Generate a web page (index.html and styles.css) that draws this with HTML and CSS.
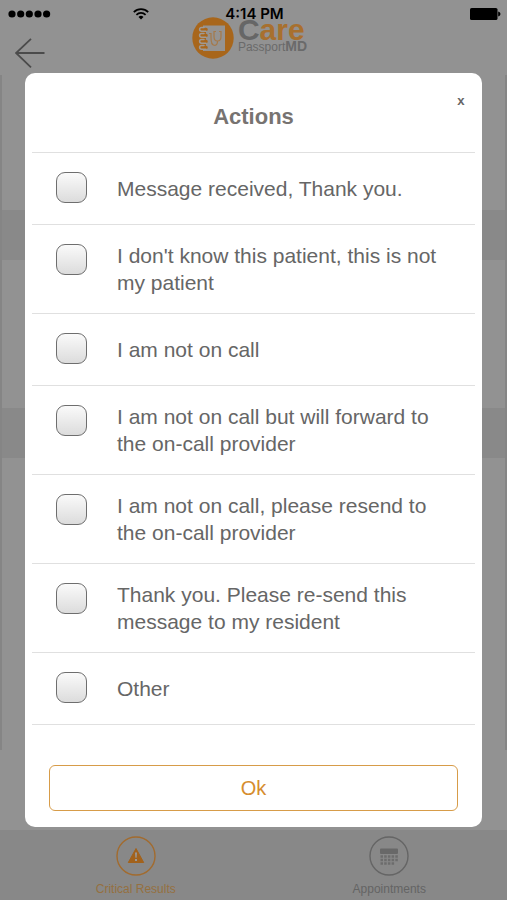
FILE: index.html
```html
<!DOCTYPE html>
<html lang="en">
<head>
<meta charset="utf-8">
<meta name="viewport" content="width=device-width, initial-scale=1">
<title>Care PassportMD</title>
<link rel="stylesheet" href="styles.css">
</head>
<body>
<div class="screen">
  <div class="app">
    <header class="app-header">
      <div class="status-bar">
        <span class="status-left">
          <svg width="44" height="10" viewBox="0 0 44 10"><circle cx="4" cy="5" r="3.6"/><circle cx="12.7" cy="5" r="3.6"/><circle cx="21.3" cy="5" r="3.6"/><circle cx="30" cy="5" r="3.6"/><circle cx="38.6" cy="5" r="3.6"/></svg>
          <svg class="wifi" width="16" height="12" viewBox="0 0 16 12"><g fill="none" stroke="#000" stroke-width="1.7"><path d="M.8 4.1a10.2 10.2 0 0 1 14.4 0"/><path d="M3.4 6.8a6.5 6.5 0 0 1 9.2 0"/></g><path d="M8 11.6 5.5 8.9a3.6 3.6 0 0 1 5 0z"/></svg>
        </span>
        <span class="clock">4:14 PM</span>
        <svg class="battery" width="31" height="12" viewBox="0 0 31 12"><rect width="27.5" height="12" rx="1.6"/><path d="M28.2 3.5c3 .8 3 4.2 0 5z"/></svg>
      </div>
      <div class="title-bar">
        <button class="back" type="button" aria-label="Back">
          <svg width="30" height="30" viewBox="0 0 30 30" fill="none" stroke="#4b4b4b" stroke-width="1.8"><path d="M29.5 15H1M16 .8 1 15l15 14.300"/></svg>
        </button>
        <div class="brand">
          <svg width="42" height="42" viewBox="0 0 42 42">
            <circle cx="21" cy="21" r="20.7" fill="#a8661b"/>
            <path d="M11 8.500h22V34H11z" fill="#959391"/>
            <g fill="none" stroke="#a8661b" stroke-width="2.600"><path d="M10 15.500h4M10 21.500h4M10 27.500h4"/></g>
            <g fill="none" stroke="#a8661b" stroke-width="3.600" stroke-linecap="round"><path d="M14 12.500H9M14 18.500H9M14 24.500H9M14 30.500H9"/></g>
            <g fill="none" stroke="#a09a94" stroke-width="1.500" stroke-linecap="round"><path d="M14 14.200H9.500a1.900 1.900 0 0 1 0-3.800H12M14 20.200H9.500a1.900 1.900 0 0 1 0-3.800H12M14 26.200H9.500a1.900 1.900 0 0 1 0-3.800H12M14 32.200H9.500a1.900 1.900 0 0 1 0-3.800H12"/></g>
            <g fill="none" stroke="#a5794a" stroke-width="1.200"><path d="M17 16.500h2v4M19 20.500c0 5 1 8 4 8M24 14.500h-2v5c0 6 7 6 7 0v-5h-2M25.500 24c0 6-5 5-6 2"/></g>
          </svg>
          <div class="brand-text">
            <div class="brand-care"><span>C</span>are</div>
            <div class="brand-sub">Passport<b>MD</b></div>
          </div>
        </div>
      </div>
    </header>
    <main class="content">
      <div class="pane"></div>
      <div class="band"></div>
      <div class="pane mid"></div>
      <div class="band"></div>
      <div class="pane tall"></div>
    </main>
    <nav class="tabs">
      <a class="tab active" href="#results">
        <svg width="40" height="40" viewBox="0 0 40 40"><circle cx="20" cy="20" r="19" fill="none" stroke="#a26b2e" stroke-width="1.4"/><path d="M20 12.500 27.700 26.500H12.300z" fill="#a2621c" stroke="#a2621c" stroke-linejoin="round"/><path d="M19 16.500h2l-.4 5.200h-1.200zM19 23h2v2h-2z" fill="#999"/></svg>
        <span>Critical Results</span>
      </a>
      <a class="tab" href="#appointments">
        <svg width="40" height="40" viewBox="0 0 40 40"><circle cx="20" cy="20" r="19" fill="none" stroke="#656565" stroke-width="1.4"/><rect x="11" y="12.500" width="18" height="5.500" rx="1" fill="#686868"/><path d="M11.500 20.500h17.500M11.500 24h17.500M11.500 27.500h14" stroke="#6c6c6c" stroke-width="2.400" stroke-dasharray="2.500 1.200"/></svg>
        <span>Appointments</span>
      </a>
    </nav>
  </div>
  <div class="overlay">
    <form class="dialog" role="dialog" aria-labelledby="dialog-title">
      <div class="dialog-head">
        <h1 id="dialog-title">Actions</h1>
        <button class="close" type="button" aria-label="Close">x</button>
      </div>
      <ul class="options">
        <li><label><input type="checkbox"><span>Message received, Thank you.</span></label></li>
        <li><label><input type="checkbox"><span>I don't know this patient, this is not my patient</span></label></li>
        <li><label><input type="checkbox"><span>I am not on call</span></label></li>
        <li><label><input type="checkbox"><span>I am not on call but will forward to the on-call provider</span></label></li>
        <li><label><input type="checkbox"><span>I am not on call, please resend to the on-call provider</span></label></li>
        <li><label><input type="checkbox"><span>Thank you. Please re-send this message to my resident</span></label></li>
        <li><label><input type="checkbox"><span>Other</span></label></li>
      </ul>
      <button class="ok" type="button">Ok</button>
    </form>
  </div>
</div>
</body>
</html>
```
FILE: styles.css
```css
* { box-sizing: border-box; }
body {
  margin: 0;
  background: #929292;
  font-family: "Liberation Sans", Arial, sans-serif;
}
button { font: inherit; padding: 0; border: 0; background: none; }
svg { display: block; flex: none; }

.screen { display: grid; min-height: 100vh; }
.app, .overlay { grid-area: 1 / 1; min-width: 0; }
.app { display: flex; flex-direction: column; }

.app-header { position: relative; height: 75px; }
.status-bar {
  position: absolute;
  inset: 0 0 auto;
  z-index: 1;
  height: 26px;
  padding: 0 6px 0 8px;
  display: grid;
  grid-template-columns: 1fr auto 1fr;
  align-items: center;
}
.status-left { display: flex; align-items: center; justify-content: space-between; padding-right: 76px; }
.clock { font: 600 15px/28px Inter, sans-serif; }
.battery { justify-self: end; }

.title-bar {
  height: 100%;
  display: grid;
  grid-template-columns: 1fr auto 1fr;
  padding: 0 15px;
}
.back { align-self: end; justify-self: start; margin-bottom: 7px; }
.brand { display: flex; gap: 4px; padding-top: 17px; margin-right: 8px; }
.brand-care { color: #a8702e; font: bold 30px/26px "Liberation Sans", Arial, sans-serif; }
.brand-care span { color: #666; }
.brand-sub { color: #6a6a6a; font-size: 12px; line-height: 6px; }
.brand-sub b { font-size: 14px; }

.content {
  flex: 1;
  border: solid #858585;
  border-width: 0 2px;
  display: flex;
  flex-direction: column;
  margin-bottom: 80px;
}
.pane { height: 135px; }
.pane.mid { height: 148px; }
.pane.tall { flex: 1; }
.band { height: 50px; background: #898989; }

.tabs { display: flex; height: 70px; background: #888; }
.tab {
  flex: 1;
  display: flex;
  flex-direction: column;
  align-items: center;
  gap: 6px;
  padding: 6px 0 0 18px;
  color: #646464;
  font-size: 12px;
  line-height: 14px;
  text-decoration: none;
}
.tab.active { color: #95703f; }

.overlay { z-index: 2; padding: 73px 25px; }
.dialog {
  min-height: 754px;
  padding: 0 7px;
  border-radius: 10px;
  background: #fff;
  color: #666;
}
.dialog-head { position: relative; height: 79px; padding-top: 30px; }
h1 { margin: 0; color: #777371; font-size: 22px; line-height: 27px; text-align: center; }
.close {
  position: absolute;
  top: 19px;
  right: 8px;
  width: 12px;
  color: #666;
  font: bold 13px/20px "Liberation Mono", monospace;
}

.options { list-style: none; margin: 0; padding: 0; border-bottom: 1px solid #e0e0e0; }
.options li { border-top: 1px solid #e0e0e0; }
.options label {
  display: flex;
  align-items: center;
  gap: 30px;
  min-height: 71px;
  padding: 0 30px 0 24px;
  font-size: 21px;
  line-height: 27px;
}
.options span { padding: 17px 0; }
.options input {
  appearance: none;
  flex: none;
  align-self: flex-start;
  width: 31px;
  height: 31px;
  margin: 19px 0 0;
  border: 1px solid #6e6e6e;
  border-radius: 9px;
  background: linear-gradient(#fafafa, #dcdcdc);
}
.options input:checked { background: #e19a33; }

.ok {
  display: block;
  width: calc(100% - 34px);
  height: 46px;
  margin: 40px 17px 0;
  border: 1px solid #d79c49;
  border-radius: 6px;
  color: #d68d2e;
  font-size: 20px;
}
```
